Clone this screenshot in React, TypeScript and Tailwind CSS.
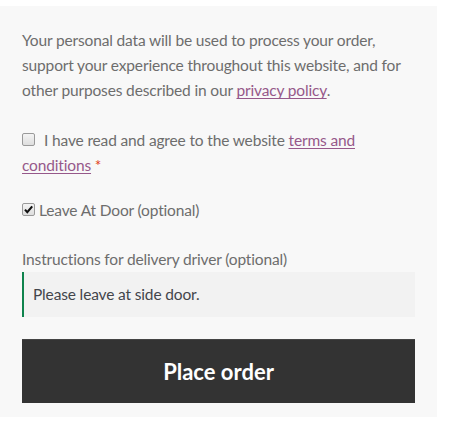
import React from 'react';

const font = { fontFamily: 'Lato, "Open Sans", sans-serif' };

function Box({ checked }: { checked?: boolean }) {
  return (
    <span className="relative inline-block w-[13px] h-[13px] rounded-[2px] border border-[#9a9a9a] bg-gradient-to-b from-[#f4f4f4] to-[#dedede] align-baseline">
      {checked && (
        <svg viewBox="0 0 11 11" className="absolute left-[0px] top-[0px] w-[11px] h-[11px]">
          <path d="M2 5.6 L4.3 8.2 L9.2 2.4" fill="none" stroke="#111" strokeWidth="2.1" />
        </svg>
      )}
    </span>
  );
}

export default function App() {
  return (
    <div className="min-h-screen bg-white pt-[6px]" style={font}>
      <div className="w-[437px] bg-[#f8f8f8] px-[22px] pt-[22px] pb-[14px] text-[15.5px] tracking-[-0.15px] leading-[25.2px] text-[#6d6d6d]">
        <p className="mb-[24px]">
          Your personal data will be used to process your order, support your experience throughout this website, and for other purposes described in our{' '}
          <a className="text-[#96588a] underline underline-offset-2">privacy policy</a>.
        </p>

        <p className="mb-[20px]">
          <Box />
          <span className="ml-[9px]">I have read and agree to the website </span>
          <a className="text-[#96588a] underline underline-offset-2">terms and conditions</a>{' '}
          <span className="text-[#e2401c]">*</span>
        </p>

        <p className="mb-[24px]">
          <Box checked />
          <span className="ml-[4px]">Leave At Door (optional)</span>
        </p>

        <label className="block">Instructions for delivery driver (optional)</label>
        <div className="h-[45px] bg-[#f2f2f2] border-l-2 border-[#0f834d] pl-[9px] flex items-center text-[#43454b]">
          Please leave at side door.
        </div>

        <button className="mt-[22px] w-full h-[64px] bg-[#333333] border-t border-[#444] text-white font-bold text-[22px] tracking-normal leading-none">
          Place order
        </button>
      </div>
    </div>
  );
}
